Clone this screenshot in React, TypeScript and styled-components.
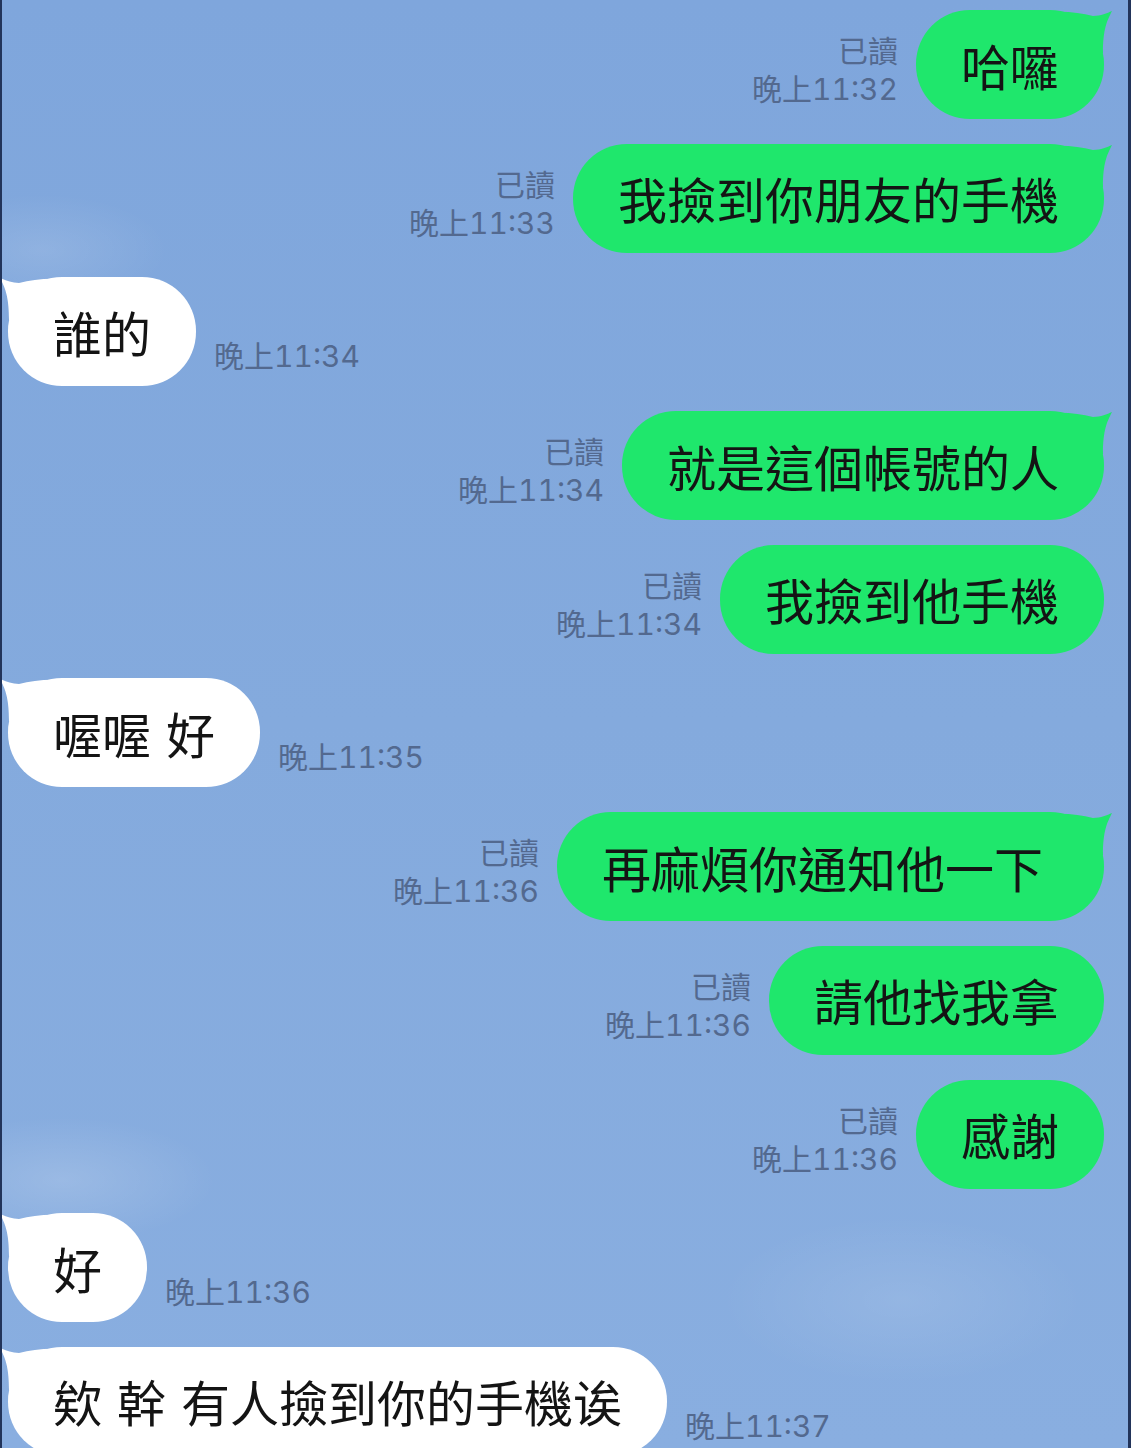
import React from 'react'
import styled, { createGlobalStyle } from 'styled-components'

const GlobalStyle = createGlobalStyle`
    html, body {
        margin: 0;
        padding: 0;
        background: #82a8dc;
    }
    body {
        font-family: "Noto Sans CJK TC", "Noto Sans", sans-serif;
    }
`

const Screen = styled.div`
    position: relative;
    box-sizing: border-box;
    width: 1131px;
    height: 1448px;
    overflow: hidden;
    padding-top: 10px;
    border-left: 2px solid #22345a;
    border-right: 3px solid #22345a;
    background:
        radial-gradient(ellipse 220px 90px at 60px 1180px, rgba(255, 255, 255, 0.16), transparent 70%),
        radial-gradient(ellipse 260px 120px at 900px 1300px, rgba(255, 255, 255, 0.1), transparent 70%),
        radial-gradient(ellipse 180px 80px at 40px 250px, rgba(255, 255, 255, 0.12), transparent 70%),
        linear-gradient(180deg, #7fa6dc 0%, #84aadd 50%, #89aee0 100%);
`

const List = styled.div`
    display: flex;
    flex-direction: column;
    gap: 24.7px;
`

const Row = styled.div<{ $mine?: boolean }>`
    display: flex;
    flex-direction: ${({ $mine }) => ($mine ? 'row-reverse' : 'row')};
    align-items: flex-end;
    gap: 18px;
    padding: ${({ $mine }) => ($mine ? '0 24px 0 0' : '0 0 0 6px')};
`

const Bubble = styled.div<{ $mine?: boolean; $extra?: number }>`
    position: relative;
    flex-shrink: 0;
    padding: 25.5px ${({ $extra }) => 45 + ($extra || 0)}px 25.5px 45px;
    border-radius: 54px;
    background: ${({ $mine }) => ($mine ? '#1fe76c' : '#ffffff')};
    color: #141414;
    font-size: 49px;
    line-height: 58px;
    word-spacing: 4px;
    white-space: pre;
`

const Tail = styled.svg<{ $mine?: boolean }>`
    position: absolute;
    top: 1px;
    width: 62px;
    height: 42px;
    ${({ $mine }) => ($mine ? 'right: -9px;' : 'left: -9px; transform: scaleX(-1);')}
`

const Meta = styled.div<{ $mine?: boolean }>`
    display: flex;
    flex-direction: column;
    align-items: ${({ $mine }) => ($mine ? 'flex-end' : 'flex-start')};
    padding-bottom: 11px;
    color: #53698f;
    font-family: Inter, "Noto Sans CJK TC", sans-serif;
    font-variant-numeric: tabular-nums;
    font-size: 30px;
    line-height: 38px;
    white-space: nowrap;
`

type Message = {
    text: string
    time: string
    mine?: boolean
    tail?: boolean
    extra?: number
}

const messages: Message[] = [
    { text: '哈囉', time: '11:32', mine: true, tail: true },
    { text: '我撿到你朋友的手機', time: '11:33', mine: true, tail: true },
    { text: '誰的', time: '11:34', tail: true },
    { text: '就是這個帳號的人', time: '11:34', mine: true, tail: true },
    { text: '我撿到他手機', time: '11:34', mine: true },
    { text: '喔喔 好', time: '11:35', tail: true },
    { text: '再麻煩你通知他一下', time: '11:36', mine: true, tail: true, extra: 16 },
    { text: '請他找我拿', time: '11:36', mine: true },
    { text: '感謝', time: '11:36', mine: true },
    { text: '好', time: '11:36', tail: true },
    { text: '欸 幹 有人撿到你的手機诶', time: '11:37', tail: true },
]

function BubbleTail({ mine }: { mine?: boolean }) {
    return (
        <Tail $mine={mine} viewBox="0 0 62 42">
            <path
                d="M0 1 C16 0 30 2 42 5 C50 5 56 2 61 0 C56 10 52 18 52 42 L0 42 Z"
                fill={mine ? '#1fe76c' : '#ffffff'}
            />
        </Tail>
    )
}

function ChatRow({ message }: { message: Message }) {
    const { text, time, mine, tail, extra } = message
    return (
        <Row $mine={mine}>
            <Bubble $mine={mine} $extra={extra}>
                {tail && <BubbleTail mine={mine} />}
                {text}
            </Bubble>
            <Meta $mine={mine}>
                {mine && <span>已讀</span>}
                <span>晚上{time}</span>
            </Meta>
        </Row>
    )
}

export default function App() {
    return (
        <>
            <GlobalStyle />
            <Screen>
                <List>
                    {messages.map((m, i) => (
                        <ChatRow key={i} message={m} />
                    ))}
                </List>
            </Screen>
        </>
    )
}
